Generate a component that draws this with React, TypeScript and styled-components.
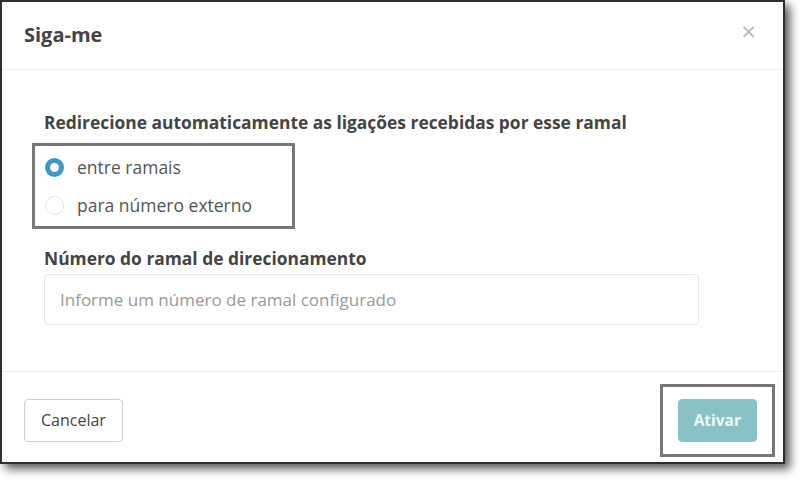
import React, { useState } from 'react';
import styled, { createGlobalStyle } from 'styled-components';

const GlobalStyle = createGlobalStyle`
    body {
        margin: 0;
        background: #ffffff;
        font-family: 'Open Sans', 'Noto Sans', sans-serif;
        color: #444;
    }
    * {
        box-sizing: border-box;
    }
`;

const colors = {
    text: '#444444',
    muted: '#999999',
    line: '#ececec',
    frame: '#777777',
    blue: '#3d97c8',
    teal: '#86c2c6',
};

const Page = styled.div`
    width: 800px;
    height: 480px;
    overflow: hidden;
`;

const Dialog = styled.div`
    width: 785px;
    height: 464px;
    background: #fff;
    border: solid 2px #2e2e2e;
    box-shadow: 5px 5px 9px rgba(0, 0, 0, 0.65);
    display: flex;
    flex-direction: column;
`;

const Header = styled.div`
    height: 68px;
    display: flex;
    align-items: flex-start;
    justify-content: space-between;
    padding: 20px 26px 0 22px;
    border-bottom: solid 1px ${colors.line};
`;

const Title = styled.div`
    font-weight: bold;
    font-size: 20px;
    line-height: 26px;
    color: ${colors.text};
`;

const Close = styled.button`
    border: none;
    background: none;
    padding: 0;
    margin-top: -1px;
    font-size: 20px;
    color: #b5b5b5;
    font-family: 'DejaVu Sans', sans-serif;
    line-height: 20px;
    cursor: pointer;
`;

const Body = styled.div`
    flex: 1;
    padding: 40px 42px 0 42px;
    border-bottom: solid 1px ${colors.line};
`;

const Label = styled.div`
    font-weight: bold;
    font-size: 17.4px;
    line-height: 24px;
    color: ${colors.text};
    margin-bottom: 9px;
`;

const Highlight = styled.div<{ $pad: string }>`
    display: inline-flex;
    flex-direction: column;
    border: solid 3px ${colors.frame};
    padding: ${(p) => p.$pad};
`;

const RadioRow = styled.label`
    display: flex;
    align-items: center;
    gap: 13px;
    height: 38px;
    font-size: 17.5px;
    color: #555;
    cursor: pointer;
`;

const RadioDot = styled.span<{ $checked: boolean }>`
    width: 19px;
    height: 19px;
    border-radius: 50%;
    border: ${(p) => (p.$checked ? `solid 5px ${colors.blue}` : 'solid 1px #e2e2e2')};
    background: #fff;
`;

const Field = styled.div`
    margin-top: 17px;
`;

const Input = styled.input`
    width: 655px;
    height: 51px;
    margin-top: -5px;
    border: solid 1px #e6e6e6;
    border-radius: 4px;
    padding: 0 15px;
    font-size: 17px;
    font-family: inherit;
    color: ${colors.text};
    outline: none;
    &::placeholder {
        color: ${colors.muted};
    }
`;

const Footer = styled.div`
    height: 90px;
    display: flex;
    align-items: center;
    justify-content: space-between;
    padding: 6px 8px 0 22px;
`;

const Button = styled.button<{ $primary?: boolean }>`
    height: 43px;
    padding: 0 ${(p) => (p.$primary ? '15px' : '16px')};
    border-radius: 4px;
    font-family: inherit;
    font-size: ${(p) => (p.$primary ? '15.5px' : '16px')};
    border: solid 1px ${(p) => (p.$primary ? colors.teal : '#cfcfcf')};
    background: ${(p) => (p.$primary ? colors.teal : '#fff')};
    color: ${(p) => (p.$primary ? '#f2f8f8' : colors.text)};
    font-weight: ${(p) => (p.$primary ? 'bold' : 'normal')};
`;

export default function App() {
    const [mode, setMode] = useState<'ramal' | 'externo'>('ramal');
    const options: { id: 'ramal' | 'externo'; label: string }[] = [
        { id: 'ramal', label: 'entre ramais' },
        { id: 'externo', label: 'para número externo' },
    ];
    return (
        <Page>
            <GlobalStyle />
            <Dialog>
                <Header>
                    <Title>Siga-me</Title>
                    <Close>×</Close>
                </Header>
                <Body>
                    <Label>Redirecione automaticamente as ligações recebidas por esse ramal</Label>
                    <Highlight $pad="2px 40px 2px 10px" style={{ marginLeft: -12 }}>
                        {options.map((o) => (
                            <RadioRow key={o.id} onClick={() => setMode(o.id)}>
                                <RadioDot $checked={mode === o.id} />
                                {o.label}
                            </RadioRow>
                        ))}
                    </Highlight>
                    <Field>
                        <Label>Número do ramal de direcionamento</Label>
                        <Input placeholder="Informe um número de ramal configurado" />
                    </Field>
                </Body>
                <Footer>
                    <Button>Cancelar</Button>
                    <Highlight $pad="12px 15px">
                        <Button $primary>Ativar</Button>
                    </Highlight>
                </Footer>
            </Dialog>
        </Page>
    );
}
